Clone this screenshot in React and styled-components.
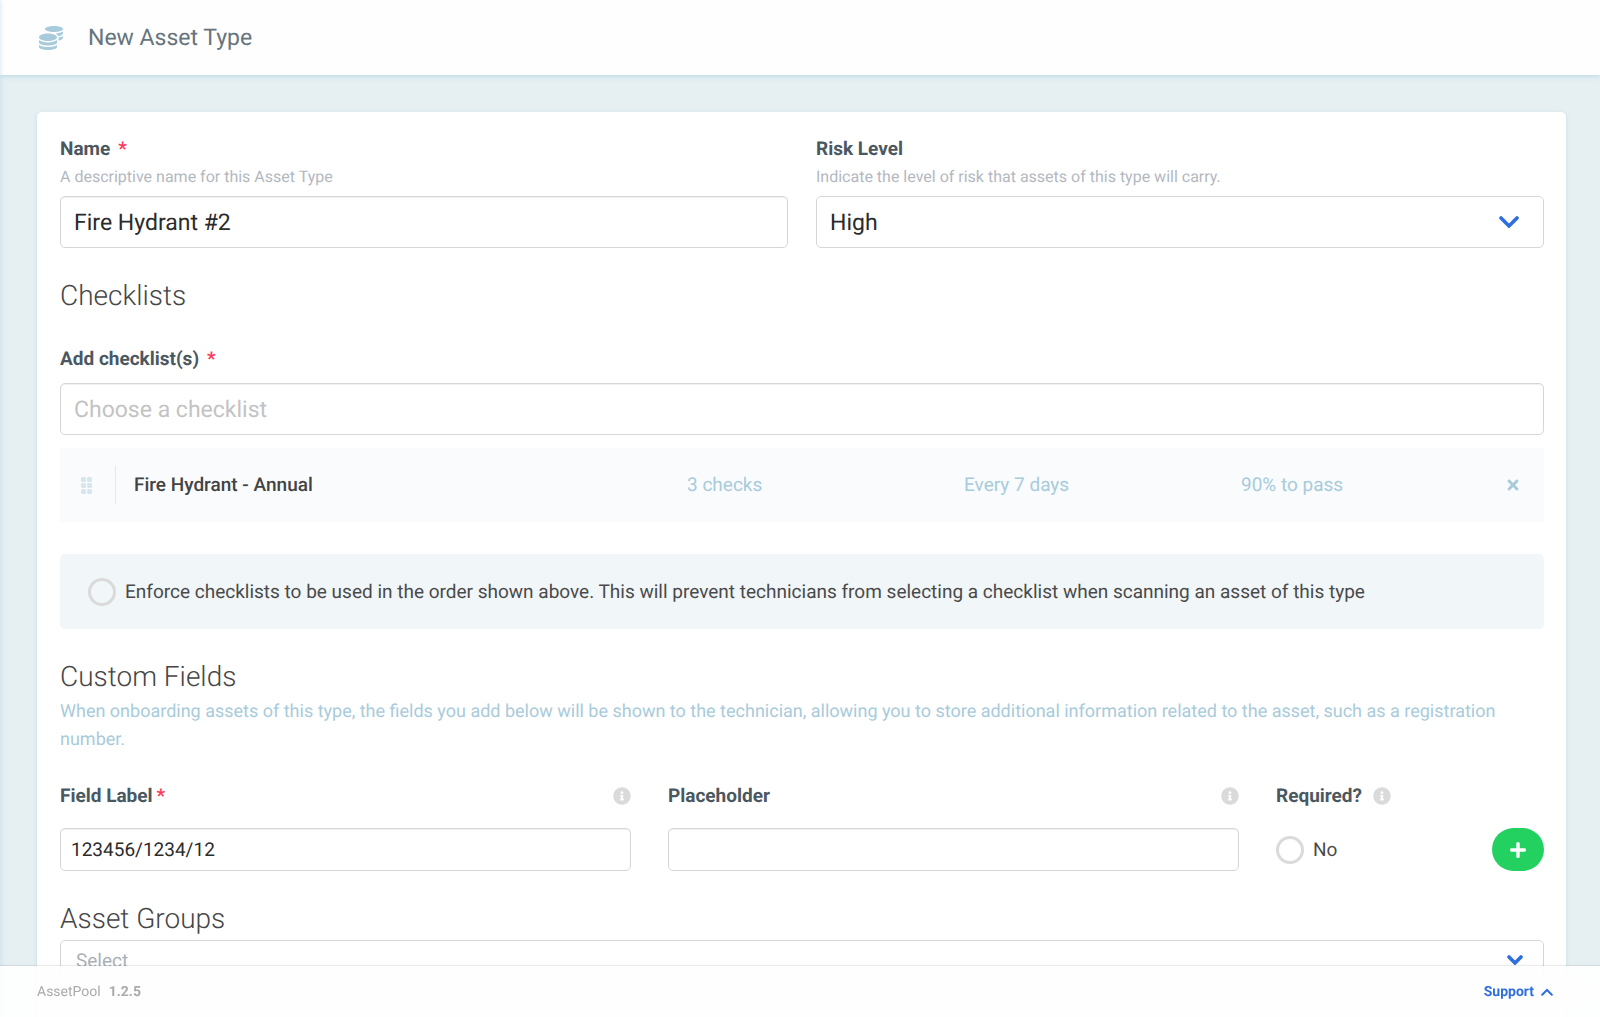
import { useState } from "react";
import styled, { createGlobalStyle } from "styled-components";
import { FaCoins, FaInfoCircle, FaPlus, FaTimes } from "react-icons/fa";

const GlobalStyle = createGlobalStyle`
  * {
    box-sizing: border-box;
  }
  body {
    margin: 0;
    background-color: #e6eff2;
    color: #4a4a4a;
    font-family: Roboto, "Liberation Sans", sans-serif;
    font-size: 19px;
    line-height: 28px;
    text-rendering: geometricPrecision;
  }
  button, input, select {
    font-family: inherit;
    margin: 0;
    text-rendering: inherit;
  }
`;

const Page = styled.div`
  height: 100vh;
  display: flex;
  flex-direction: column;
  /* soft edge on the left, over the header too */
  &::after {
    content: "";
    position: fixed;
    top: 0;
    bottom: 0;
    left: -10px;
    width: 10px;
    box-shadow: 0 0 5px rgba(160, 205, 225, 0.5);
    pointer-events: none;
    z-index: 1;
  }
`;
const Header = styled.header`
  flex: none;
  height: 75px;
  padding: 0 39px;
  display: flex;
  align-items: center;
  gap: 25px;
  background-color: #fefefe;
  box-shadow: 0 1px 5px #b9d8e6;
  color: #a8cbdb;
  z-index: 1;
`;
const Title = styled.h1`
  margin: 0;
  font-size: 23px;
  font-weight: 400;
  color: #67747c;
`;
const Main = styled.main`
  flex: 1;
  min-height: 0;
  overflow-y: auto;
  scrollbar-width: none;
  padding: 37px 34px 0 37px;
`;
const Card = styled.form`
  padding: 23px 22px 80px 23px;
  background-color: white;
  border-radius: 5px;
  box-shadow: 0 1px 4px #c5dfea;
`;
const Columns = styled.div`
  display: grid;
  grid-template-columns: 1fr 1fr;
  gap: 28px;
`;
const Label = styled.label`
  display: block;
  color: #4b585f;
  font-weight: 700;
`;
const Required = styled.span`
  margin-left: ${({ $tight }) => ($tight ? "4px" : "8px")};
  color: #ff3860;
`;
const Help = styled.p`
  margin: 0 0 5px;
  font-size: 16px;
  color: #b3b8bf;
`;
const Input = styled.input`
  display: block;
  width: 100%;
  height: ${({ $small }) => ($small ? "43px" : "52px")};
  padding: ${({ $small }) => ($small ? "0 10px" : "0 13px")};
  border: 1px solid #d6d6d6;
  border-radius: 5px;
  background-color: white;
  box-shadow: inset 0 1px 1px rgba(10, 10, 10, 0.06);
  color: #2b2b2b;
  font-size: ${({ $small }) => ($small ? "19px" : "23px")};
  outline: 0;
  &::placeholder {
    color: #c3c3c3;
  }
`;
const SelectWrap = styled.div`
  position: relative;
`;
const Select = styled.select`
  display: block;
  width: 100%;
  height: ${({ $small }) => ($small ? "40px" : "52px")};
  padding: ${({ $small }) => ($small ? "0 15px" : "0 13px")};
  appearance: none;
  border: 1px solid #d6d6d6;
  border-radius: 5px;
  background-color: white;
  color: ${({ $small }) => ($small ? "#aab0b8" : "#2b2b2b")};
  font-size: ${({ $small }) => ($small ? "19px" : "23px")};
  outline: 0;
`;
const Arrow = styled.svg`
  position: absolute;
  right: ${({ $small }) => ($small ? "21px" : "25px")};
  top: 50%;
  transform: translateY(-50%);
  fill: none;
  stroke: #2f6fdd;
  stroke-linecap: round;
  pointer-events: none;
`;
const SectionTitle = styled.h2`
  margin: 0;
  font-size: 28px;
  font-weight: 300;
  line-height: 42px;
  color: #464646;
`;
const ChecklistSection = styled.section`
  padding-top: 27px;
  & > label {
    margin: 28px 0 10px;
  }
`;
const ChecklistRow = styled.div`
  margin-top: 13px;
  height: 74px;
  padding: 0 23px 0 21px;
  display: grid;
  grid-template-columns: 35px 571fr 277fr 277fr 264fr auto;
  align-items: center;
  background-color: #fafbfd;
  color: #a8cbdb;
`;
const Handle = styled.div`
  height: 38px;
  display: flex;
  align-items: center;
  border-right: 1px solid #dcebf1;
  color: #d5e6ed;
`;
const ChecklistName = styled.span`
  padding-left: 18px;
  color: #434343;
  font-weight: 500;
`;
const RemoveButton = styled.button`
  display: flex;
  padding: 0;
  border: 0;
  background: none;
  color: #a8cbdb;
  cursor: pointer;
`;
const Enforce = styled.div`
  margin-top: 32px;
  height: 75px;
  padding: 0 28px;
  display: flex;
  align-items: center;
  background-color: #f1f6f9;
  border-radius: 5px;
`;
const Check = styled.label`
  display: flex;
  align-items: center;
  gap: 9px;
  cursor: pointer;
`;
const Round = styled.input`
  appearance: none;
  flex: none;
  width: 28px;
  height: 28px;
  margin: 0;
  border: 3px solid #dadada;
  border-radius: 50%;
  &:checked {
    background-color: #23d160;
  }
`;
const FieldsSection = styled.section`
  padding-top: 27px;
`;
const Description = styled.p`
  margin: 0;
  font-size: 18px;
  color: #a8cbdb;
`;
const Fields = styled.div`
  margin-top: 28px;
  display: grid;
  grid-template-columns: 571fr 571fr 268fr;
  gap: 37px;
`;
const FieldHead = styled.div`
  margin-bottom: 18px;
  display: flex;
  align-items: center;
  justify-content: ${({ $packed }) => ($packed ? "flex-start" : "space-between")};
  gap: 11px;
  color: #dadada;
`;
const RequiredRow = styled.div`
  display: flex;
  align-items: center;
  justify-content: space-between;
`;
const AddButton = styled.button`
  width: 52px;
  height: 43px;
  display: flex;
  align-items: center;
  justify-content: center;
  padding: 0;
  border: 0;
  border-radius: 22px;
  background-color: #23d160;
  color: white;
  cursor: pointer;
`;
const Footer = styled.footer`
  position: fixed;
  right: 0;
  bottom: 0;
  left: 0;
  height: 51px;
  padding-left: 37px;
  display: flex;
  align-items: center;
  justify-content: space-between;
  background-color: rgba(254, 254, 254, 0.95);
  box-shadow: 0 0 2px rgba(10, 10, 10, 0.25);
  font-size: 14px;
  line-height: 20px;
  color: #ababab;
  z-index: 2;
`;
const Version = styled.strong`
  margin-left: 8px;
`;
const SupportButton = styled.button`
  display: flex;
  align-items: center;
  gap: 7px;
  padding: 4px 47px 4px 9px;
  border: 0;
  background-color: #fefefe;
  color: #2f6fdd;
  font-size: 14px;
  font-weight: 700;
  cursor: pointer;
`;

function GripIcon() {
  return (
    <svg width="11" height="17" viewBox="0 0 11 17" fill="currentColor">
      {[0, 6, 12].map((y) => (
        <g key={y}>
          <rect x="0" y={y} width="5" height="5" rx="1.5" />
          <rect x="6" y={y} width="5" height="5" rx="1.5" />
        </g>
      ))}
    </svg>
  );
}

export default function App() {
  const [name, setName] = useState("Fire Hydrant #2");
  const [fieldLabel, setFieldLabel] = useState("123456/1234/12");
  const [required, setRequired] = useState(false);

  return (
    <>
      <GlobalStyle />
      <Page>
        <Header>
          <FaCoins size={24} />
          <Title>New Asset Type</Title>
        </Header>
        <Main>
          <Card onSubmit={(e) => e.preventDefault()}>
            <Columns>
              <div>
                <Label htmlFor="name">
                  Name<Required>*</Required>
                </Label>
                <Help>A descriptive name for this Asset Type</Help>
                <Input
                  id="name"
                  value={name}
                  onChange={(e) => setName(e.target.value)}
                />
              </div>
              <div>
                <Label htmlFor="risk">Risk Level</Label>
                <Help>
                  Indicate the level of risk that assets of this type will
                  carry.
                </Help>
                <SelectWrap>
                  <Select id="risk" defaultValue="High">
                    <option>Low</option>
                    <option>Medium</option>
                    <option>High</option>
                  </Select>
                  <Arrow width="20" height="13" viewBox="0 0 20 13">
                    <path d="M2 2.5l8 8 8-8" strokeWidth="3.6" />
                  </Arrow>
                </SelectWrap>
              </div>
            </Columns>

            <ChecklistSection>
              <SectionTitle>Checklists</SectionTitle>
              <Label htmlFor="checklist">
                Add checklist(s)<Required>*</Required>
              </Label>
              <Input id="checklist" placeholder="Choose a checklist" />
              <ChecklistRow>
                <Handle>
                  <GripIcon />
                </Handle>
                <ChecklistName>Fire Hydrant - Annual</ChecklistName>
                <span>3 checks</span>
                <span>Every 7 days</span>
                <span>90% to pass</span>
                <RemoveButton type="button" aria-label="Remove checklist">
                  <FaTimes size={16} />
                </RemoveButton>
              </ChecklistRow>
              <Enforce>
                <Check>
                  <Round type="checkbox" />
                  Enforce checklists to be used in the order shown above. This
                  will prevent technicians from selecting a checklist when
                  scanning an asset of this type
                </Check>
              </Enforce>
            </ChecklistSection>

            <FieldsSection>
              <SectionTitle>Custom Fields</SectionTitle>
              <Description>
                When onboarding assets of this type, the fields you add below
                will be shown to the technician, allowing you to store
                additional information related to the asset, such as a
                registration number.
              </Description>
              <Fields>
                <div>
                  <FieldHead>
                    <Label htmlFor="field-label">
                      Field Label<Required $tight>*</Required>
                    </Label>
                    <FaInfoCircle size={18} />
                  </FieldHead>
                  <Input
                    $small
                    id="field-label"
                    value={fieldLabel}
                    onChange={(e) => setFieldLabel(e.target.value)}
                  />
                </div>
                <div>
                  <FieldHead>
                    <Label htmlFor="placeholder">Placeholder</Label>
                    <FaInfoCircle size={18} />
                  </FieldHead>
                  <Input $small id="placeholder" />
                </div>
                <div>
                  <FieldHead $packed>
                    <Label htmlFor="required">Required?</Label>
                    <FaInfoCircle size={18} />
                  </FieldHead>
                  <RequiredRow>
                    <Check>
                      <Round
                        id="required"
                        type="checkbox"
                        checked={required}
                        onChange={(e) => setRequired(e.target.checked)}
                      />
                      {required ? "Yes" : "No"}
                    </Check>
                    <AddButton type="button" aria-label="Add field">
                      <FaPlus size={18} />
                    </AddButton>
                  </RequiredRow>
                </div>
              </Fields>
            </FieldsSection>

            <FieldsSection>
              <SectionTitle id="groups-title">Asset Groups</SectionTitle>
              <SelectWrap>
                <Select $small aria-labelledby="groups-title">
                  <option>Select</option>
                </Select>
                <Arrow $small width="16" height="11" viewBox="0 0 16 11">
                  <path d="M2 2.5l6 6 6-6" strokeWidth="3.6" />
                </Arrow>
              </SelectWrap>
            </FieldsSection>
          </Card>
        </Main>
        <Footer>
          <span>
            AssetPool<Version>1.2.5</Version>
          </span>
          <SupportButton type="button">
            Support
            <svg width="12" height="8" viewBox="0 0 12 8" fill="none">
              <path
                d="M1.2 6.8L6 2l4.8 4.8"
                stroke="currentColor"
                strokeWidth="2"
                strokeLinecap="round"
              />
            </svg>
          </SupportButton>
        </Footer>
      </Page>
    </>
  );
}
